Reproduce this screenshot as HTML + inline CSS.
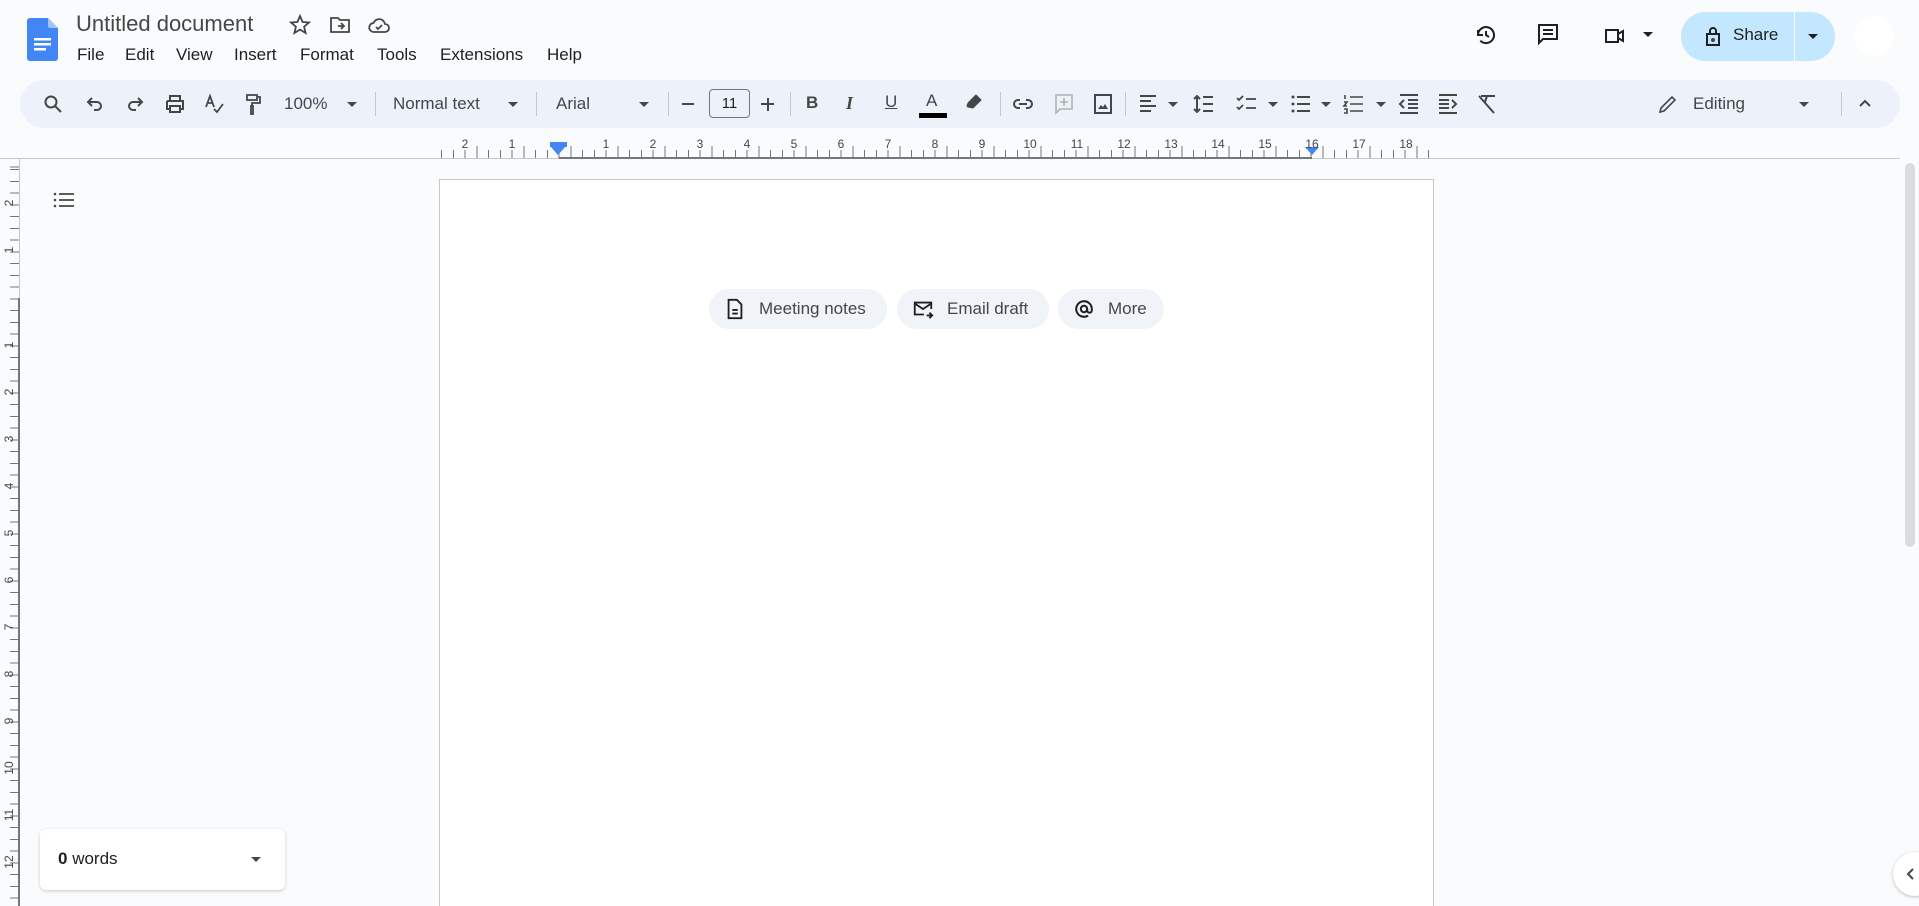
<!DOCTYPE html>
<html style="width:1919px;height:906px;overflow:hidden"><head><meta charset="utf-8"><style>
*{box-sizing:border-box;margin:0;padding:0}
body{width:1919px;height:906px;overflow:hidden;background:#f9fbfd;font-family:"Liberation Sans",Arial,sans-serif;color:#1f1f1f;position:relative}
.a{position:absolute}
.ic{position:absolute;width:24px;height:24px}
.ic svg{width:24px;height:24px;fill:none;stroke:#444746;stroke-width:2}
.menu span{position:absolute;top:45px;font-size:17px;color:#1f1f1f}
.tb{left:20px;top:80px;width:1880px;height:48px;background:#edf2fa;border-radius:24px}
.sep{position:absolute;top:92px;width:1px;height:24px;background:#c7c7c7}
.dd{position:absolute;width:0;height:0;border-left:5px solid transparent;border-right:5px solid transparent;border-top:5px solid #444746}
.tt{position:absolute;font-size:17px;color:#444746;top:94px}
.chip{position:absolute;top:289px;height:40px;background:#f0f4f9;border-radius:20px;font-size:17px;color:#444746;line-height:40px}
.rn{position:absolute;top:137px;font-size:12px;color:#444746;width:20px;text-align:center;margin-left:-10px}
.vn{position:absolute;left:2px;font-size:12px;color:#444746;transform:rotate(-90deg);width:14px;text-align:center}
</style></head><body>
<svg class="a" style="left:27px;top:18px" width="31" height="43" viewBox="0 0 31 43"><path d="M3 0h18l10 10v30a3 3 0 0 1-3 3H3a3 3 0 0 1-3-3V3a3 3 0 0 1 3-3z" fill="#4285f4"/><path d="M21 0l10 10H23a2 2 0 0 1-2-2z" fill="#a1c2fa"/><rect x="7" y="20" width="17" height="2.5" fill="#fff"/><rect x="7" y="25" width="17" height="2.5" fill="#fff"/><rect x="7" y="30" width="12" height="2.5" fill="#fff"/></svg>
<div class="a" style="left:76px;top:11px;font-size:22px;color:#444746">Untitled document</div>
<div class="ic" style="left:288px;top:13px"><svg viewBox="0 0 24 24"><path d="M12 3l2.6 6 6.4.5-4.9 4.2 1.5 6.3L12 16.6 6.4 20l1.5-6.3L3 9.5 9.4 9z" stroke-width="1.8"/></svg></div>
<div class="ic" style="left:328px;top:13px"><svg viewBox="0 0 24 24"><path d="M3 5h7l2 2h9v12H3z M10 13h6 M13 10l3 3-3 3" stroke-width="1.8"/></svg></div>
<div class="ic" style="left:367px;top:13px"><svg viewBox="0 0 24 24"><path d="M7 19h11a4 4 0 0 0 0-8 6 6 0 0 0-11.5-1A4.5 4.5 0 0 0 7 19z M9 14l2 2 4-4" stroke-width="1.8"/></svg></div>
<div class="menu"><span style="left:77px">File</span><span style="left:125px">Edit</span><span style="left:176px">View</span><span style="left:234px">Insert</span><span style="left:300px">Format</span><span style="left:377px">Tools</span><span style="left:440px">Extensions</span><span style="left:547px">Help</span></div>
<div class="ic" style="left:1474px;top:23px"><svg viewBox="0 0 24 24"><path d="M4 12a8 8 0 1 1 2.3 5.7 M4 7v5h5 M12 8v4l3 2" stroke="#1f1f1f"/></svg></div>
<div class="ic" style="left:1536px;top:22px"><svg viewBox="0 0 24 24"><path d="M3 3h18v14H7l-4 4z M7 8h10 M7 12h10" stroke="#1f1f1f"/></svg></div>
<div class="ic" style="left:1603px;top:24px"><svg viewBox="0 0 24 24"><path d="M3 6h12v12H3z M15 10l5-3v10l-5-3" stroke="#1f1f1f"/></svg></div>
<div class="dd" style="left:1643px;top:32px;border-top-color:#1f1f1f"></div>
<div class="a" style="left:1681px;top:12px;width:154px;height:49px;background:#c2e7ff;border-radius:25px"></div>
<div class="a" style="left:1794px;top:12px;width:1px;height:49px;background:#fff"></div>
<div class="ic" style="left:1701px;top:24px"><svg viewBox="0 0 24 24"><path d="M6 10h12v11H6z M9 10V7a3 3 0 0 1 6 0v3" stroke="#1f1f1f"/><circle cx="12" cy="16" r="1" fill="#1f1f1f"/></svg></div>
<div class="a" style="left:1733px;top:25px;font-size:17px;color:#1f1f1f">Share</div>
<div class="dd" style="left:1808px;top:34px;border-top-color:#1f1f1f"></div>
<div class="a" style="left:1854px;top:16px;width:40px;height:40px;border-radius:50%;background:#fff"></div>
<div class="a tb"></div>
<div class="ic" style="left:41px;top:92px"><svg viewBox="0 0 24 24"><circle cx="10" cy="10" r="5.5"/><path d="M14 14l6 6"/></svg></div>
<div class="ic" style="left:83px;top:92px"><svg viewBox="0 0 24 24"><path d="M9 8L5 12l4 4 M5 12h9a4 4 0 0 1 0 8h-3" transform="translate(0,-2)"/></svg></div>
<div class="ic" style="left:123px;top:92px"><svg viewBox="0 0 24 24"><path d="M15 8l4 4-4 4 M19 12h-9a4 4 0 0 0 0 8h3" transform="translate(0,-2)"/></svg></div>
<div class="ic" style="left:163px;top:92px"><svg viewBox="0 0 24 24"><path d="M7 8V4h10v4 M4 9h16v8h-3 M7 17H4V9 M7 14h10v6H7z"/></svg></div>
<div class="ic" style="left:202px;top:92px"><svg viewBox="0 0 24 24"><path d="M4 15l4-11 4 11 M5.5 11h5 M12 17l3 3 6-8" stroke-width="1.8"/></svg></div>
<div class="ic" style="left:241px;top:92px"><svg viewBox="0 0 24 24"><path d="M6 3h10v5H6z M16 5h3v6h-8v3 M10 14h2v8h-2z" stroke-width="1.8"/></svg></div>
<div class="tt" style="left:284px">100%</div><div class="dd" style="left:347px;top:102px"></div>
<div class="sep" style="left:375px"></div>
<div class="tt" style="left:393px">Normal text</div><div class="dd" style="left:508px;top:102px"></div>
<div class="sep" style="left:536px"></div>
<div class="tt" style="left:556px">Arial</div><div class="dd" style="left:639px;top:102px"></div>
<div class="sep" style="left:668px"></div>
<div class="a" style="left:682px;top:103px;width:12px;height:2px;background:#444746"></div>
<div class="a" style="left:709px;top:89px;width:41px;height:29px;border:1px solid #747775;border-radius:4px;font-size:15px;text-align:center;line-height:27px;color:#1f1f1f">11</div>
<div class="a" style="left:761px;top:103px;width:13px;height:2px;background:#444746"></div><div class="a" style="left:766.5px;top:97.5px;width:2px;height:13px;background:#444746"></div>
<div class="sep" style="left:790px"></div>
<div class="a" style="left:806px;top:93px;font-size:17px;font-weight:bold;color:#444746">B</div>
<div class="a" style="left:846px;top:93px;font-size:18px;font-style:italic;font-family:'Liberation Serif',serif;font-weight:bold;color:#444746">I</div>
<div class="a" style="left:885px;top:92px;font-size:17px;color:#444746;text-decoration:underline">U</div>
<div class="a" style="left:926px;top:91px;font-size:17px;color:#444746">A</div><div class="a" style="left:919px;top:113px;width:28px;height:5px;background:#000"></div>
<div class="ic" style="left:962px;top:91px"><svg viewBox="0 0 24 24"><path d="M14 4l5 5-8 8-5-1-1-1 1-3z" fill="#444746" stroke-width="1"/></svg></div>
<div class="sep" style="left:1000px"></div>
<div class="ic" style="left:1011px;top:92px"><svg viewBox="0 0 24 24"><path d="M9 8H7a4 4 0 0 0 0 8h2 M15 8h2a4 4 0 0 1 0 8h-2 M8 12h8"/></svg></div>
<div class="ic" style="left:1052px;top:92px"><svg viewBox="0 0 24 24"><path d="M4 3h16v14H8l-4 4z M12 6v8 M8 10h8" stroke="#b0b3b2" stroke-width="1.6"/></svg></div>
<div class="ic" style="left:1091px;top:92px"><svg viewBox="0 0 24 24"><path d="M4 3h16v18H4z"/><path d="M7 17l3-4 2 2 2-3 3 5z" fill="#444746" stroke="none"/></svg></div>
<div class="sep" style="left:1125px"></div>
<div class="ic" style="left:1137px;top:92px"><svg viewBox="0 0 24 24"><path d="M3 4h16 M3 9h11 M3 14h16 M3 19h11"/></svg></div><div class="dd" style="left:1168px;top:102px"></div>
<div class="ic" style="left:1192px;top:92px"><svg viewBox="0 0 24 24"><path d="M11 5h10 M11 12h10 M11 19h10 M5 4v16 M2 7l3-3 3 3 M2 17l3 3 3-3"/></svg></div>
<div class="ic" style="left:1235px;top:92px"><svg viewBox="0 0 24 24"><path d="M2 6l2 2 4-4 M2 15l2 2 4-4 M11 7h10 M11 16h10" stroke-width="1.8"/></svg></div><div class="dd" style="left:1268px;top:102px"></div>
<div class="ic" style="left:1289px;top:92px"><svg viewBox="0 0 24 24"><circle cx="4" cy="5" r="1.5" fill="#444746" stroke="none"/><circle cx="4" cy="12" r="1.5" fill="#444746" stroke="none"/><circle cx="4" cy="19" r="1.5" fill="#444746" stroke="none"/><path d="M8 5h13 M8 12h13 M8 19h13"/></svg></div><div class="dd" style="left:1321px;top:102px"></div>
<div class="ic" style="left:1342px;top:92px"><svg viewBox="0 0 24 24"><path d="M8 5h13 M8 12h13 M8 19h13 M3 3v4 M2 10h3l-3 4h3 M2 17h3v4H2" stroke-width="1.6"/></svg></div><div class="dd" style="left:1376px;top:102px"></div>
<div class="ic" style="left:1397px;top:92px"><svg viewBox="0 0 24 24"><path d="M3 3h18 M11 8h10 M11 12h10 M11 16h10 M3 21h18 M7 8l-4 4 4 4"/></svg></div>
<div class="ic" style="left:1436px;top:92px"><svg viewBox="0 0 24 24"><path d="M3 3h18 M3 8h10 M3 12h10 M3 16h10 M3 21h18 M16 8l4 4-4 4"/></svg></div>
<div class="ic" style="left:1475px;top:92px"><svg viewBox="0 0 24 24"><path d="M6 4h14 M12 4l-2 6 M4 4l15 17"/></svg></div>
<div class="ic" style="left:1656px;top:92px"><svg viewBox="0 0 24 24"><path d="M4 20l1-4L16 5l3 3L8 19z" stroke-width="1.6"/></svg></div>
<div class="tt" style="left:1693px">Editing</div><div class="dd" style="left:1799px;top:102px"></div>
<div class="sep" style="left:1841px"></div>
<div class="ic" style="left:1853px;top:92px"><svg viewBox="0 0 24 24"><path d="M7 14l5-5 5 5"/></svg></div>
<div class="a" style="left:0;top:158px;width:1900px;height:1px;background:#c7c7c7"></div>
<div class="a" style="left:441px;top:150px;width:992px;height:8px;background:repeating-linear-gradient(90deg,#747775 0 1px,transparent 1px 11.75px)"></div>
<div class="a" style="left:441px;top:146px;width:992px;height:12px;background:repeating-linear-gradient(90deg,transparent 0 23.5px,#747775 23.5px 24.5px,transparent 24.5px 47px);background-position:12px 0"></div>
<div class="a" style="left:559px;top:157px;width:753px;height:2px;background:#747775"></div>
<div class="a" style="left:550px;top:142px;width:17px;height:5px;background:#4285f4"></div>
<div class="a" style="left:551px;top:147px;border-left:7.5px solid transparent;border-right:7.5px solid transparent;border-top:8px solid #4285f4"></div>
<div class="a" style="left:1305px;top:147px;border-left:7.5px solid transparent;border-right:7.5px solid transparent;border-top:8px solid #4285f4"></div>
<div class="rn" style="left:465px">2</div><div class="rn" style="left:512px">1</div>
<div class="rn" style="left:606px">1</div><div class="rn" style="left:653px">2</div><div class="rn" style="left:700px">3</div><div class="rn" style="left:747px">4</div><div class="rn" style="left:794px">5</div><div class="rn" style="left:841px">6</div><div class="rn" style="left:888px">7</div><div class="rn" style="left:935px">8</div><div class="rn" style="left:982px">9</div><div class="rn" style="left:1030px">10</div><div class="rn" style="left:1077px">11</div><div class="rn" style="left:1124px">12</div><div class="rn" style="left:1171px">13</div><div class="rn" style="left:1218px">14</div><div class="rn" style="left:1265px">15</div><div class="rn" style="left:1312px">16</div><div class="rn" style="left:1359px">17</div><div class="rn" style="left:1406px">18</div>
<div class="a" style="left:19px;top:159px;width:1px;height:747px;background:#c7c7c7"></div>
<div class="a" style="left:10px;top:163px;width:9px;height:743px;background:repeating-linear-gradient(180deg,#747775 0 1px,transparent 1px 11.75px);background-position:0 6px"></div>
<div class="a" style="left:18px;top:298px;width:2px;height:608px;background:#747775"></div>
<div class="vn" style="top:196px">2</div><div class="vn" style="top:243px">1</div>
<div class="vn" style="top:338px">1</div><div class="vn" style="top:385px">2</div><div class="vn" style="top:432px">3</div><div class="vn" style="top:479px">4</div><div class="vn" style="top:526px">5</div><div class="vn" style="top:573px">6</div><div class="vn" style="top:620px">7</div><div class="vn" style="top:667px">8</div><div class="vn" style="top:714px">9</div><div class="vn" style="top:761px">10</div><div class="vn" style="top:808px">11</div><div class="vn" style="top:855px">12</div>
<div class="ic" style="left:52px;top:188px"><svg viewBox="0 0 24 24"><circle cx="3" cy="6" r="1.3" fill="#444746" stroke="none"/><circle cx="3" cy="12" r="1.3" fill="#444746" stroke="none"/><circle cx="3" cy="18" r="1.3" fill="#444746" stroke="none"/><path d="M7 6h15 M7 12h15 M7 18h15" stroke-width="1.8"/></svg></div>
<div class="a" style="left:439px;top:179px;width:995px;height:727px;background:#fff;border:1px solid #c7c7c7;border-bottom:none"></div>
<div class="chip" style="left:709px;width:178px"><svg class="a" style="left:15px;top:9px" width="22" height="22" viewBox="0 0 24 24" fill="none" stroke="#1f1f1f" stroke-width="2"><path d="M5 2h9l5 5v15H5z M9 13h6 M9 17h6"/></svg><span style="position:absolute;left:50px">Meeting notes</span></div>
<div class="chip" style="left:897px;width:152px"><svg class="a" style="left:15px;top:9px" width="22" height="22" viewBox="0 0 24 24" fill="none" stroke="#1f1f1f" stroke-width="2"><path d="M13 18H3V5h18v7 M3 6l9 6 9-6 M16 19h6 M19 16l3 3-3 3"/></svg><span style="position:absolute;left:50px">Email draft</span></div>
<div class="chip" style="left:1058px;width:106px"><svg class="a" style="left:15px;top:9px" width="22" height="22" viewBox="0 0 24 24" fill="none" stroke="#1f1f1f" stroke-width="2.2"><circle cx="12" cy="12" r="3.5"/><path d="M15.5 12v1.5a2.5 2.5 0 0 0 5 0V12a8.5 8.5 0 1 0-4 7.2"/></svg><span style="position:absolute;left:50px">More</span></div>
<div class="a" style="left:40px;top:829px;width:245px;height:61px;background:#fff;border-radius:6px;box-shadow:0 1px 3px rgba(0,0,0,.2)"></div>
<div class="a" style="left:58px;top:849px;font-size:17px;color:#1f1f1f"><b>0</b> words</div>
<div class="dd" style="left:251px;top:857px"></div>
<div class="a" style="left:1905px;top:163px;width:10px;height:384px;background:#dadce0;border-radius:5px"></div>
<div class="a" style="left:1893px;top:852px;width:44px;height:44px;border-radius:50%;background:#fff;box-shadow:0 1px 3px rgba(0,0,0,.25)"></div>
<svg class="a" style="left:1903px;top:866px" width="14" height="16" viewBox="0 0 14 16"><path d="M10 3L5 8l5 5" stroke="#444746" stroke-width="2" fill="none"/></svg>
</body></html>
